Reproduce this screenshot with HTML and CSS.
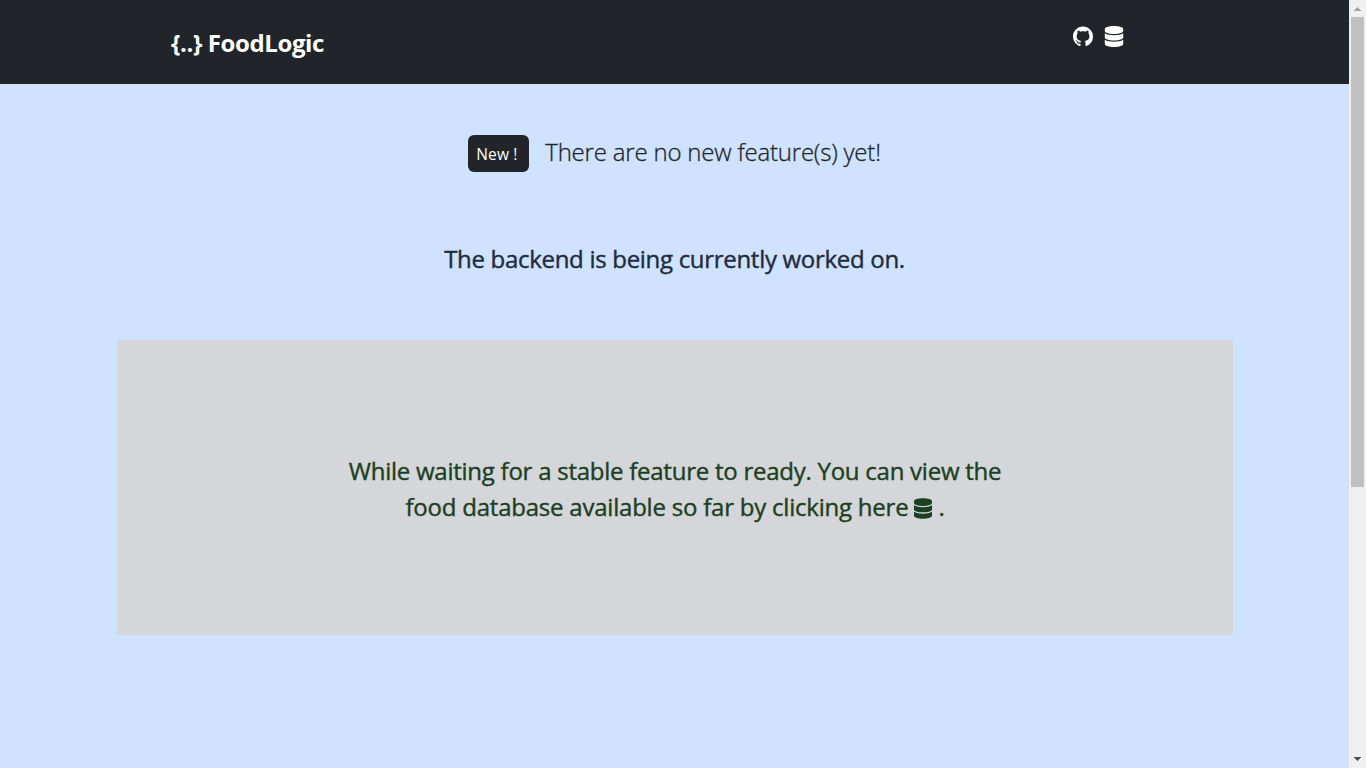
FILE: index.html
```html
<!DOCTYPE html>
<html lang="en">
<head>
<meta charset="utf-8">
<title>FoodLogic</title>
<link rel="stylesheet" href="styles.css">
</head>
<body>
<svg class="defs" aria-hidden="true">
  <symbol id="database" viewBox="0 0 448 512"><path d="M448 73.1v45.8C448 159.1 347.700 192 224 192S0 159.100 0 118.900V73.100C0 32.900 100.300 0 224 0s224 32.900 224 73.100zM448 176v102.900C448 319.100 347.700 352 224 352S0 319.100 0 278.900V176c48.100 33.100 136.200 48.600 224 48.600S399.900 209.100 448 176zm0 160v102.900C448 479.100 347.700 512 224 512S0 479.100 0 438.900V336c48.100 33.100 136.200 48.600 224 48.600S399.900 369.100 448 336z"/></symbol>
</svg>
<div class="page">
  <div class="content">
    <header class="navbar">
      <a class="brand"><span class="brand-text">{..} FoodLogic</span></a>
      <nav class="links">
        <svg class="icon-github" viewBox="0 0 16 16"><path d="M8 0C3.580 0 0 3.580 0 8c0 3.540 2.290 6.530 5.470 7.590.4.070.55-.17.55-.38 0-.19-.01-.82-.01-1.490-2.010.37-2.530-.49-2.690-.94-.09-.23-.48-.94-.82-1.130-.28-.15-.68-.52-.01-.53.63-.01 1.080.58 1.230.82.72 1.210 1.870.87 2.330.66.07-.52.28-.87.51-1.070-1.780-.2-3.640-.89-3.640-3.950 0-.87.31-1.590.82-2.150-.08-.2-.36-1.020.08-2.120 0 0 .67-.21 2.200.82.64-.18 1.320-.27 2-.27s1.360.09 2 .27c1.530-1.040 2.200-.82 2.200-.82.44 1.100.16 1.920.08 2.120.51.56.82 1.270.82 2.150 0 3.070-1.870 3.750-3.650 3.950.29.25.54.73.54 1.480 0 1.070-.01 1.930-.01 2.200 0 .21.15.46.55.38A8.010 8.010 0 0 0 16 8c0-4.420-3.580-8-8-8z"/></svg>
        <svg class="icon-db"><use href="#database"/></svg>
      </nav>
    </header>
    <main class="main">
      <div class="news"><span class="badge">New !</span><span class="news-text">There are no new feature(s) yet!</span></div>
      <p class="status">The backend is being currently worked on.</p>
      <section class="panel">
        <p class="line first">While waiting for a stable feature to ready. You can view the</p>
        <p class="line second"><span class="second-text">food database available so far by clicking here</span><svg class="icon-inline"><use href="#database"/></svg><span>.</span></p>
      </section>
    </main>
  </div>
  <div class="scrollbar">
    <svg class="arrow up" viewBox="0 0 7 4" shape-rendering="crispEdges"><path d="M3 0h1v1h1v1h1v1h1v1H0V3h1V2h1V1h1z"/></svg>
    <div class="thumb"></div>
    <svg class="arrow down" viewBox="0 0 7 4" shape-rendering="crispEdges"><path d="M0 0h7v1H6v1H5v1H4v1H3V3H2V2H1V1H0z"/></svg>
  </div>
</div>
</body>
</html>
```
FILE: styles.css
```css
* { box-sizing: border-box; }
body { margin: 0; font-family: "Open Sans", "Noto Sans", sans-serif; background: #cfe2ff; overflow: hidden; }
p { margin: 0; }
.defs { display: none; }
.page { display: flex; width: 1366px; height: 768px; }
.content { width: 1349px; }
.navbar { display: flex; justify-content: space-between; align-items: flex-start; height: 84px; padding: 25px 225px 0 171px; background: #212529; color: #fff; }
.brand { font-size: 24px; font-weight: 700; line-height: 36px; white-space: nowrap; letter-spacing: -0.4px; }
.links { display: flex; gap: 11px; padding-top: 1px; }
.links svg { fill: #fff; display: block; }
.icon-github { width: 20px; height: 21px; }
.icon-db { width: 20px; height: 21px; }
.main { display: flex; flex-direction: column; align-items: center; padding-top: 51px; white-space: nowrap; }
.news { display: flex; align-items: flex-start; gap: 16px; height: 37px; color: #212529; }
.badge { width: 61px; height: 37px; padding-left: 8px; border-radius: 6px; background: #212529; color: #fff; font-size: 15.5px; line-height: 38px; letter-spacing: 0.15px; }
.news-text { font-size: 24px; font-weight: 300; line-height: 33px; letter-spacing: -0.2px; -webkit-text-stroke: 0.3px; }
.status { margin-top: 69px; font-size: 24px; font-weight: 500; line-height: 36px; letter-spacing: -0.3px; color: #1f2b3e; -webkit-text-stroke: 0.4px; }
.panel { width: 1116px; height: 295px; margin: 63px 0 0 1px; padding-top: 113px; background: #d5d6d9; color: #1c4023; font-size: 24px; font-weight: 500; line-height: 36px; letter-spacing: -0.25px; -webkit-text-stroke: 0.4px; }
.line { display: flex; justify-content: center; }
.second { align-items: flex-start; letter-spacing: -0.22px; }
.icon-inline { width: 18px; height: 21px; margin: 9px 6px 0; fill: #1c4023; }
.scrollbar { display: flex; flex-direction: column; align-items: center; width: 17px; height: 768px; background: #f0f0f0; }
.arrow { width: 7px; height: 4px; }
.up { margin-top: 7px; fill: #a3a3a3; }
.thumb { width: 13px; height: 470px; margin-top: 6px; background: #c0c0c0; }
.down { margin: auto 0 7px; fill: #505050; }
```
